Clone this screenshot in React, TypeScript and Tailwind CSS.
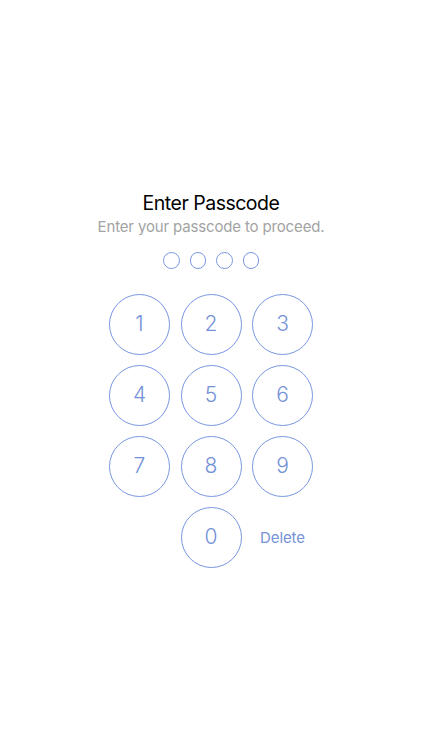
import React from "react";

export default function App() {
  const keys = ["1", "2", "3", "4", "5", "6", "7", "8", "9"];
  return (
    <div
      className="w-[422px] h-[750px] bg-white flex flex-col items-center"
      style={{ fontFamily: "Inter, 'Noto Sans', sans-serif" }}
    >
      <div className="mt-[191px] text-[19.5px] leading-[24px] tracking-[-0.5px] text-black">Enter Passcode</div>
      <div className="mt-[2px] text-[15px] leading-[20px] tracking-[-0.15px] text-[#a3a3a3]">
        Enter your passcode to proceed.
      </div>
      <div className="mt-[15px] flex gap-[10px]">
        {[0, 1, 2, 3].map((i) => (
          <div key={i} className="w-[16.5px] h-[16.5px] rounded-full border border-[#7898e0]" />
        ))}
      </div>
      <div className="mt-[25px] grid grid-cols-[61px_61px_61px] gap-x-[10.5px] gap-y-[10px]">
        {keys.map((k) => (
          <div
            key={k}
            className="w-[61px] h-[61px] rounded-full border border-[#7898e0] flex items-center justify-center text-[21px] font-light text-[#7592d8]"
          >
            {k}
          </div>
        ))}
        <div />
        <div className="w-[61px] h-[61px] rounded-full border border-[#7898e0] flex items-center justify-center text-[21px] font-light text-[#7592d8]">
          0
        </div>
        <div className="w-[61px] h-[61px] flex items-center justify-center pt-[3px] text-[15px] tracking-[-0.1px] text-[#7592d8]">
          Delete
        </div>
      </div>
    </div>
  );
}
